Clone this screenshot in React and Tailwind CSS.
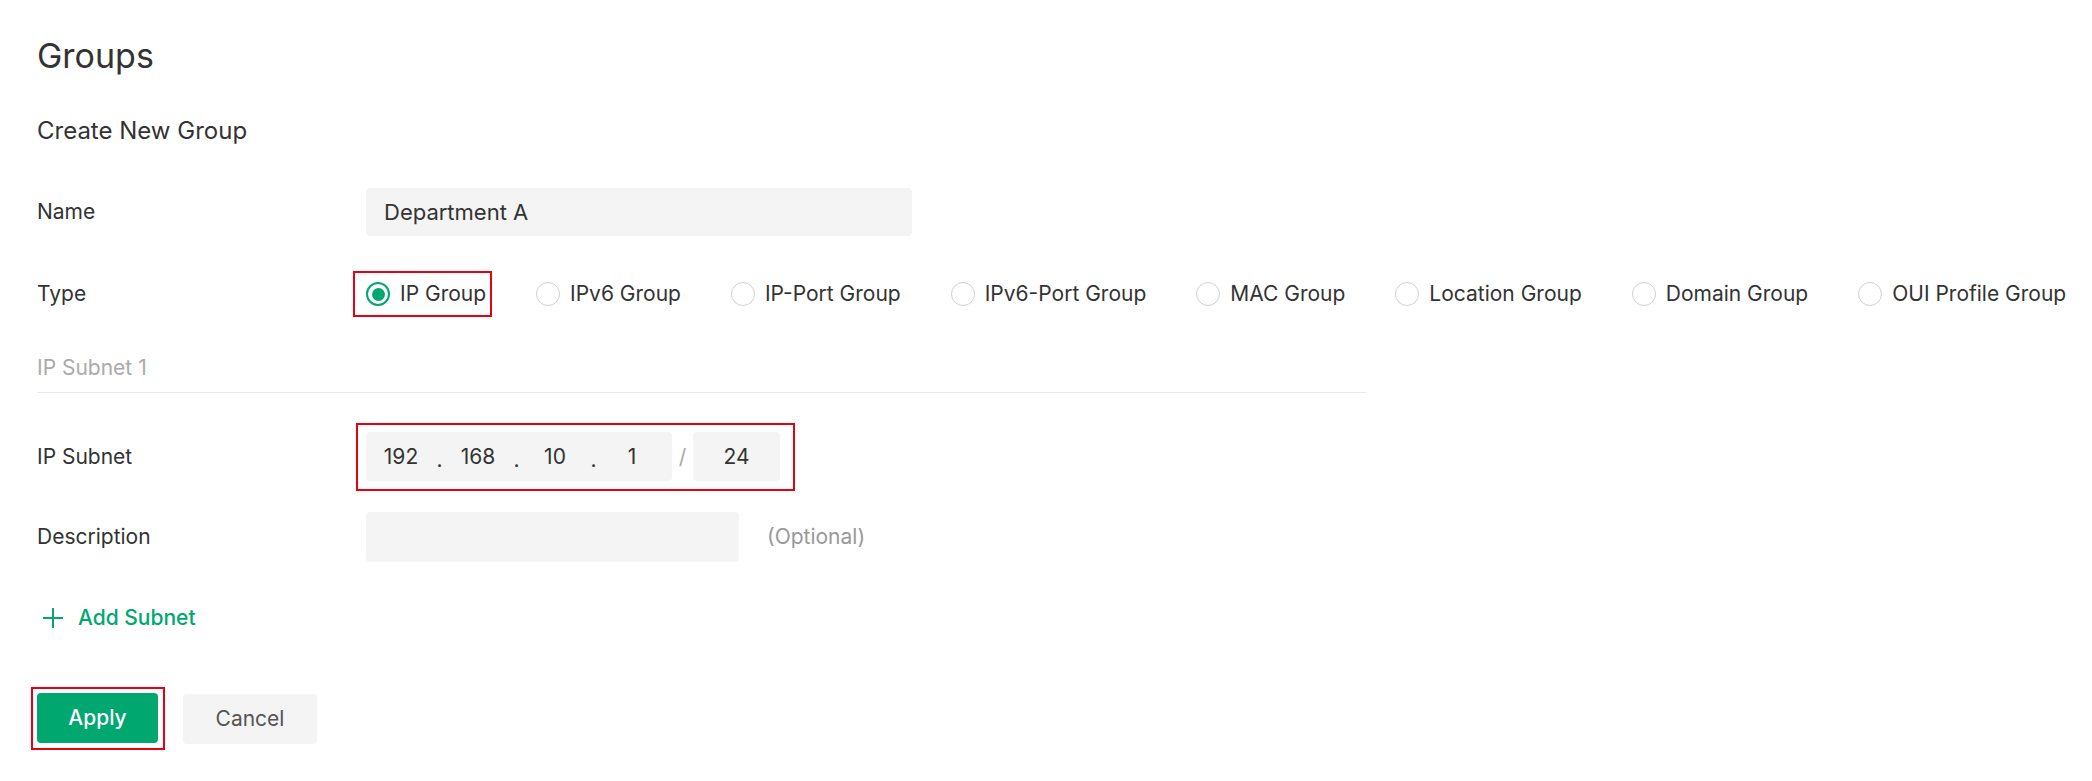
import React from "react";

const TYPES = [
  "IP Group",
  "IPv6 Group",
  "IP-Port Group",
  "IPv6-Port Group",
  "MAC Group",
  "Location Group",
  "Domain Group",
  "OUI Profile Group",
];

function Radio({ checked, label }) {
  return (
    <label className="flex items-center gap-[10px] cursor-pointer">
      <span
        className={
          checked
            ? "flex h-[24px] w-[24px] items-center justify-center rounded-full border-2 border-[#00a870]"
            : "flex h-[24px] w-[24px] items-center justify-center rounded-full border-[1.5px] border-[#d0d0d0]"
        }
      >
        {checked && <span className="h-[13px] w-[13px] rounded-full bg-[#00a870]" />}
      </span>
      <span className="text-[21px] leading-[28px] text-[#333] whitespace-nowrap">{label}</span>
    </label>
  );
}

function Row({ label, children, className = "" }) {
  return (
    <div className={"flex items-center " + className}>
      <div className="w-[329px] shrink-0 text-[21px] leading-[28px] text-[#333]">{label}</div>
      {children}
    </div>
  );
}

function Octet({ value }) {
  return (
    <span className="w-[62px] text-center text-[21px] leading-[28px] text-[#333]">{value}</span>
  );
}

function Dot() {
  return (
    <span className="w-[15px] pt-[6px] text-center text-[21px] leading-[28px] text-[#333]">.</span>
  );
}

export default function App() {
  return (
    <div className="min-h-screen bg-white px-[37px] pt-[36px] font-['Inter',sans-serif] text-[#333]">
      <h1 className="text-[34px] leading-[40px] font-normal">Groups</h1>
      <h2 className="mt-[40px] text-[24px] leading-[30px] font-normal">Create New Group</h2>

      <Row label="Name" className="mt-[42px]">
        <div className="flex h-[48px] w-[546px] items-center rounded-[4px] bg-[#f4f4f4] pl-[18px] text-[22px] text-[#333]">
          Department A
        </div>
      </Row>

      <Row label="Type" className="mt-[35px] h-[46px]">
        <div className="flex items-center gap-[50px]">
          {TYPES.map((t, i) =>
            i === 0 ? (
              <div
                key={t}
                className="-ml-[13px] -mr-[6px] flex h-[46px] items-center border-2 border-[#e60012] pl-[11px] pr-[4px]"
              >
                <Radio checked label={t} />
              </div>
            ) : (
              <Radio key={t} label={t} />
            )
          )}
        </div>
      </Row>

      <div className="mt-[37px] w-[1329px] border-b border-[#e8e8e8] pb-[10px] text-[21px] leading-[28px] text-[#aaa]">
        IP Subnet 1
      </div>

      <Row label="IP Subnet" className="mt-[30px]">
        <div className="-ml-[10px] flex items-center border-2 border-[#e60012] pb-[8px] pl-[8px] pr-[13px] pt-[7px]">
          <div className="flex h-[49px] w-[306px] items-center rounded-[4px] bg-[#f4f4f4] pl-[4px]">
            <Octet value="192" />
            <Dot />
            <Octet value="168" />
            <Dot />
            <Octet value="10" />
            <Dot />
            <Octet value="1" />
          </div>
          <span className="w-[21px] text-center text-[21px] text-[#aaa]">/</span>
          <div className="flex h-[49px] w-[87px] items-center justify-center rounded-[4px] bg-[#f4f4f4] text-[21px] text-[#333]">
            24
          </div>
        </div>
      </Row>

      <Row label="Description" className="mt-[21px]">
        <div className="h-[50px] w-[373px] rounded-[4px] bg-[#f4f4f4]" />
        <span className="ml-[28px] text-[21px] leading-[28px] text-[#999]">(Optional)</span>
      </Row>

      <button className="mt-[42px] flex items-center gap-[14px] pl-[5px] text-[21px] font-medium leading-[28px] text-[#00a870]">
        <svg width="22" height="22" viewBox="0 0 22 22" fill="none" stroke="currentColor" strokeWidth="2">
          <path d="M11 1v20M1 11h20" />
        </svg>
        Add Subnet
      </button>

      <div className="mt-[55px] flex items-center gap-[18px]">
        <div className="-ml-[6px] border-2 border-[#e60012] pb-[5px] pl-[4px] pr-[5px] pt-[4px]">
          <button className="h-[50px] w-[121px] rounded-[4px] bg-[#00a870] text-[21px] font-medium text-white">
            Apply
          </button>
        </div>
        <button className="h-[50px] w-[134px] rounded-[4px] bg-[#f4f4f4] text-[21px] text-[#555]">
          Cancel
        </button>
      </div>
    </div>
  );
}
